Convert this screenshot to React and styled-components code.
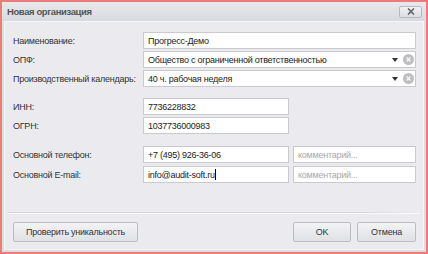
import React from "react";
import styled, { createGlobalStyle } from "styled-components";

const Global = createGlobalStyle`
  html, body { margin: 0; padding: 0; background: #fff; }
  body { font-family: "Liberation Sans", Arial, sans-serif; font-size: 9px; letter-spacing: -0.25px; color: #333; }
`;

const Win = styled.div`
  width: 428px;
  height: 254px;
  box-sizing: border-box;
  border: 2px solid #ee7a7a;
  background: #dcdde2;
  display: flex;
  flex-direction: column;
`;

const TitleBar = styled.div`
  height: 19px;
  display: flex;
  align-items: center;
  justify-content: space-between;
  padding: 0 4px 0 5px;
  background: linear-gradient(#e9e9ec, #d9dadf);
`;

const Title = styled.div`
  font-weight: bold;
  font-size: 9.5px;
  letter-spacing: -0.4px;
  color: #555;
`;

const CloseBtn = styled.div`
  width: 21px;
  height: 10px;
  border: 1px solid #b9bac0;
  border-radius: 2px;
  background: linear-gradient(#f2f2f4, #dcdde2);
  display: flex;
  align-items: center;
  justify-content: center;
`;

const Body = styled.div`
  flex: 1;
  margin: 0 2px 2px;
  border: 1px solid #f6f6f8;
  background: #ebebef;
  display: flex;
  flex-direction: column;
`;

const Form = styled.div`
  flex: 1;
  padding: 10px 7px 0 8px;
  display: flex;
  flex-direction: column;
`;

const Row = styled.div`
  display: flex;
  align-items: center;
  height: 17px;
  margin-top: ${(p) => p.$mt || 0}px;
  gap: 4px;
`;

const Label = styled.div`
  width: 126px;
  flex: none;
  color: #333;
  white-space: nowrap;
`;

const Input = styled.div`
  box-sizing: border-box;
  height: 17px;
  width: ${(p) => (p.$w ? p.$w + "px" : "auto")};
  flex: ${(p) => (p.$w ? "none" : "1")};
  background: #fff;
  border: 1px solid #c9c9ce;
  display: flex;
  align-items: center;
  padding: 0 4px;
  color: ${(p) => (p.$placeholder ? "#a8a8ad" : "#222")};
  white-space: nowrap;
  overflow: hidden;
`;

const Text = styled.span`
  flex: 1;
`;

const Caret = styled.span`
  width: 1px;
  height: 11px;
  background: #000;
`;

const ComboTools = styled.div`
  display: flex;
  align-items: center;
  gap: 5px;
  margin-right: -3px;
`;

const Separator = styled.div`
  height: 1px;
  margin: 0 3px;
  background: linear-gradient(90deg, #d4d4d9, #d4d4d9 85%, rgba(212,212,217,0));
  border-bottom: 1px solid #fafafb;
`;

const Footer = styled.div`
  display: flex;
  align-items: center;
  padding: 8px 7px 7px 8px;
  gap: 6px;
`;

const Button = styled.div`
  box-sizing: border-box;
  width: ${(p) => p.$w}px;
  height: 20px;
  border: 1px solid #bcbdc3;
  border-radius: 2px;
  background: linear-gradient(#f3f3f5, #e0e1e5);
  display: flex;
  align-items: center;
  justify-content: center;
  color: #333;
  margin-left: ${(p) => (p.$push ? "auto" : "0")};
`;

const DropArrow = () => (
  <svg width="6" height="4" viewBox="0 0 6 4">
    <path d="M0 0 H6 L3 4 Z" fill="#333" />
  </svg>
);

const ClearIcon = () => (
  <svg width="11" height="11" viewBox="0 0 11 11">
    <circle cx="5.5" cy="5.5" r="5.5" fill="#bdbdc2" />
    <path d="M3.6 3.6 L7.4 7.4 M7.4 3.6 L3.6 7.4" stroke="#f4f4f6" strokeWidth="1.4" />
  </svg>
);

const XIcon = () => (
  <svg width="8" height="7" viewBox="0 0 8 7">
    <path d="M1 0.5 L7 6.5 M7 0.5 L1 6.5" stroke="#666" strokeWidth="1.6" />
  </svg>
);

export default function App() {
  return (
    <>
      <Global />
      <Win>
        <TitleBar>
          <Title>Новая организация</Title>
          <CloseBtn>
            <XIcon />
          </CloseBtn>
        </TitleBar>
        <Body>
          <Form>
            <Row>
              <Label>Наименование:</Label>
              <Input>Прогресс-Демо</Input>
            </Row>
            <Row $mt={2}>
              <Label>ОПФ:</Label>
              <Input>
                <Text>Общество с ограниченной ответственностью</Text>
                <ComboTools>
                  <DropArrow />
                  <ClearIcon />
                </ComboTools>
              </Input>
            </Row>
            <Row $mt={2}>
              <Label>Производственный календарь:</Label>
              <Input>
                <Text>40 ч. рабочая неделя</Text>
                <ComboTools>
                  <DropArrow />
                  <ClearIcon />
                </ComboTools>
              </Input>
            </Row>
            <Row $mt={11}>
              <Label>ИНН:</Label>
              <Input $w={146}>7736228832</Input>
            </Row>
            <Row $mt={2}>
              <Label>ОГРН:</Label>
              <Input $w={146}>1037736000983</Input>
            </Row>
            <Row $mt={12}>
              <Label>Основной телефон:</Label>
              <Input $w={146}>+7 (495) 926-36-06</Input>
              <Input $placeholder>комментарий...</Input>
            </Row>
            <Row $mt={3}>
              <Label>Основной E-mail:</Label>
              <Input $w={146}>
                info@audit-soft.ru
                <Caret />
              </Input>
              <Input $placeholder>комментарий...</Input>
            </Row>
          </Form>
          <Separator />
          <Footer>
            <Button $w={125}>Проверить уникальность</Button>
            <Button $w={58} $push>OK</Button>
            <Button $w={59}>Отмена</Button>
          </Footer>
        </Body>
      </Win>
    </>
  );
}
